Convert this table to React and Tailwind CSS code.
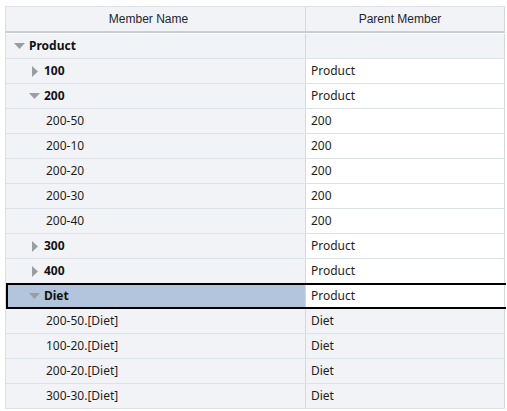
import { useState } from 'react'

const rows = [
  { name: 'Product', parent: '', level: 0, toggle: 'open', bold: true, parentBg: 'grey' },
  { name: '100', parent: 'Product', level: 1, toggle: 'closed', bold: true },
  { name: '200', parent: 'Product', level: 1, toggle: 'open', bold: true },
  { name: '200-50', parent: '200', level: 2 },
  { name: '200-10', parent: '200', level: 2 },
  { name: '200-20', parent: '200', level: 2 },
  { name: '200-30', parent: '200', level: 2 },
  { name: '200-40', parent: '200', level: 2 },
  { name: '300', parent: 'Product', level: 1, toggle: 'closed', bold: true },
  { name: '400', parent: 'Product', level: 1, toggle: 'closed', bold: true },
  { name: 'Diet', parent: 'Product', level: 1, toggle: 'open', bold: true, selected: true },
  { name: '200-50.[Diet]', parent: 'Diet', level: 2, parentBg: 'grey' },
  { name: '100-20.[Diet]', parent: 'Diet', level: 2, parentBg: 'grey' },
  { name: '200-20.[Diet]', parent: 'Diet', level: 2, parentBg: 'grey' },
  { name: '300-30.[Diet]', parent: 'Diet', level: 2, parentBg: 'grey' },
]

function Caret({ open }) {
  return open ? (
    <svg width="11" height="6" viewBox="0 0 11 6" className="shrink-0">
      <path d="M0 0 H11 L5.5 6 Z" fill="#9a9da1" />
    </svg>
  ) : (
    <svg width="6" height="11" viewBox="0 0 6 11" className="shrink-0">
      <path d="M0 0 V11 L6 5.5 Z" fill="#9a9da1" />
    </svg>
  )
}

function MemberCell({ row }) {
  const pad = { 0: 'pl-[8px]', 1: 'pl-[23px]', 2: 'pl-[40px]' }[row.level]
  return (
    <div className={`flex items-center h-full ${pad}`}>
      {row.toggle && (
        <span className={`flex items-center justify-start w-[15px] ${row.toggle === 'open' ? '' : 'pl-[3px]'}`}>
          <Caret open={row.toggle === 'open'} />
        </span>
      )}
      <span className={row.bold ? 'font-bold text-[#111]' : 'text-[#1e1e1e]'}>{row.name}</span>
    </div>
  )
}

export default function App() {
  const [selected] = useState('Diet')

  return (
    <div className="w-[507px] h-[411px] bg-white pt-[6px] pl-[5px] overflow-hidden" style={{ fontFamily: '"Noto Sans", sans-serif' }}>
      <div className="w-[500px] border-l border-[#d9dee5]">
        {/* header */}
        <div className="grid grid-cols-[299px_200px] h-[27px] border-t border-[#dfe3e8] border-b-2 border-b-[#c9ced5] bg-[#f1f3f7] text-[12px] text-[#1f2430]" style={{ fontFamily: '"Liberation Sans", Arial, sans-serif' }}>
          <div className="flex items-center justify-center pr-[14px]">Member Name</div>
          <div className="flex items-center justify-center pr-[10px] border-l border-r border-[#d4d9e0]">Parent Member</div>
        </div>

        {rows.map((row, i) => {
          const isSel = row.name === selected && row.selected
          return (
            <div
              key={i}
              className={`relative grid grid-cols-[299px_200px] h-[25px] text-[12px] border-b border-[#dde2e8] ${i === 0 ? 'mt-[1px]' : ''}`}
            >
              <div className={isSel ? 'bg-[#b3c5dc]' : 'bg-[#f1f3f7]'}>
                <MemberCell row={row} />
              </div>
              <div className={`flex items-center pl-[5px] border-l border-r border-[#d4d9e0] text-[#1e1e1e] ${row.parentBg === 'grey' ? 'bg-[#f1f3f7]' : 'bg-white'}`}>
                {row.parent}
              </div>
              {isSel && <div className="absolute left-0 right-[-1px] top-[-1px] bottom-[-1px] border-2 border-r-0 border-black pointer-events-none" />}
            </div>
          )
        })}
      </div>
    </div>
  )
}
